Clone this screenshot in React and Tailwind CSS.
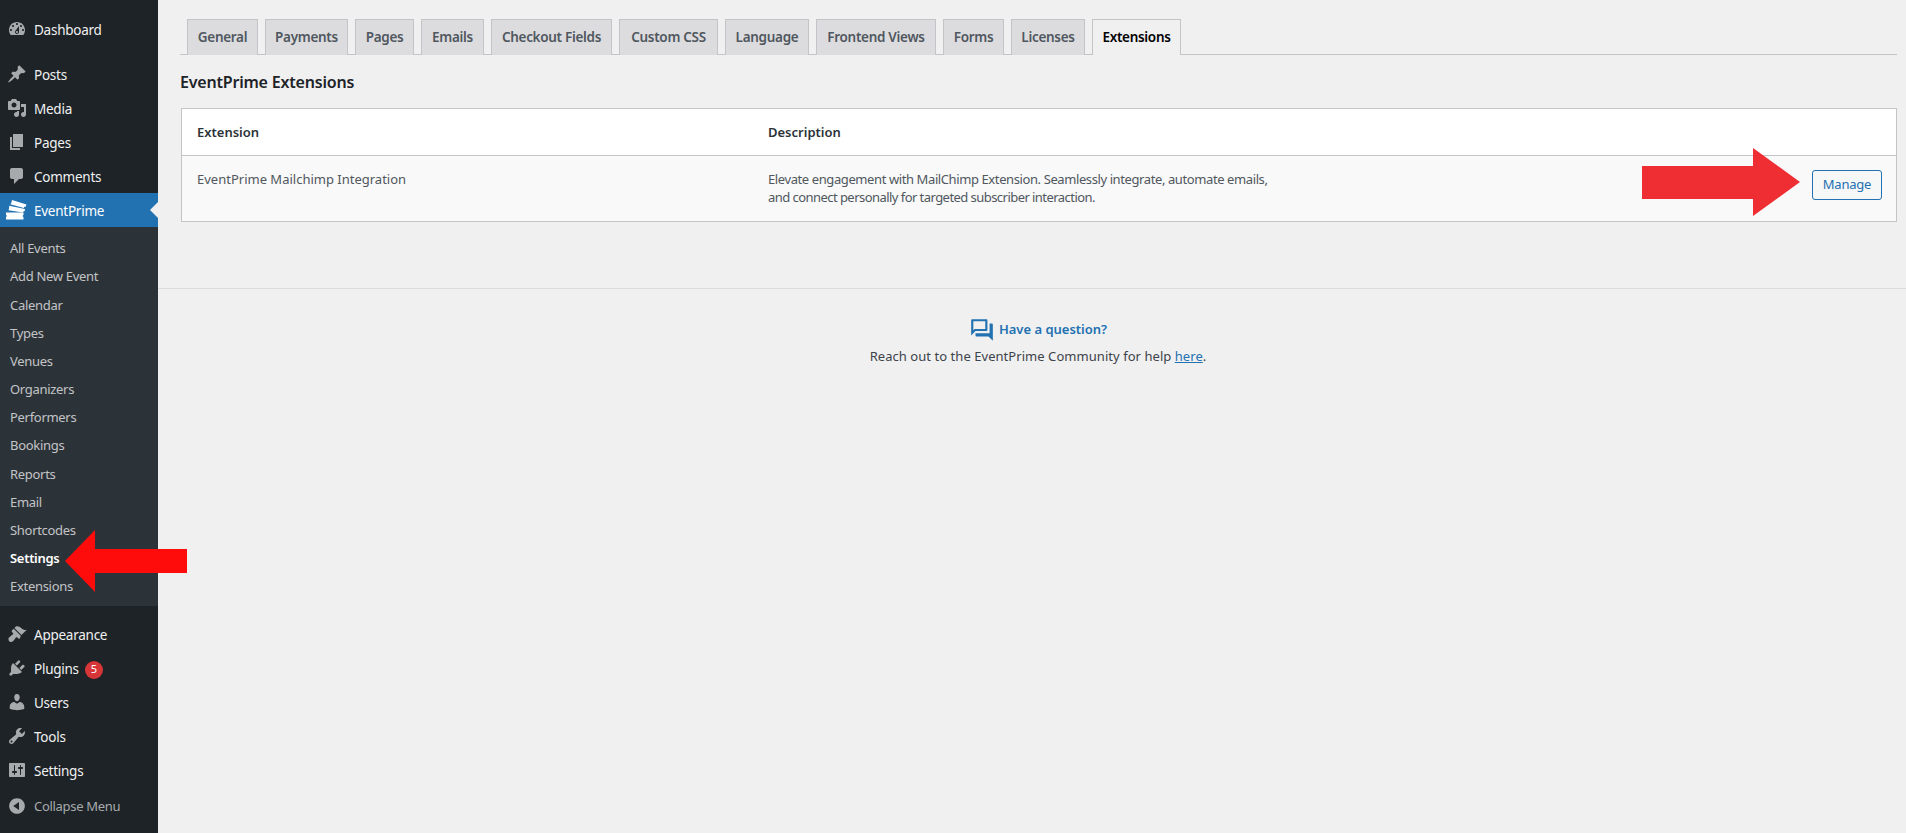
import React from 'react';

const FONT = "font-['Noto_Sans','Open_Sans',sans-serif]";

const icons = {
  dashboard: 'M3.76 16h12.48c1.1-1.37 1.76-3.11 1.76-5 0-4.42-3.58-8-8-8s-8 3.58-8 8c0 1.89.66 3.63 1.76 5zM10 4c.55 0 1 .45 1 1s-.45 1-1 1-1-.45-1-1 .45-1 1-1zM6 6c.55 0 1 .45 1 1s-.45 1-1 1-1-.45-1-1 .45-1 1-1zm8 0c.55 0 1 .45 1 1s-.45 1-1 1-1-.45-1-1 .45-1 1-1zm-5.37 5.55L12 7v6c0 1.1-.9 2-2 2s-2-.9-2-2c0-.57.24-1.08.63-1.45zM4 10c.55 0 1 .45 1 1s-.45 1-1 1-1-.45-1-1 .45-1 1-1zm12 0c.55 0 1 .45 1 1s-.45 1-1 1-1-.45-1-1 .45-1 1-1zm-5 3c0-.55-.45-1-1-1s-1 .45-1 1 .45 1 1 1 1-.45 1-1z',
  posts: 'M10.44 3.02l1.82-1.82 6.36 6.35-1.83 1.82c-1.05-.68-2.48-.57-3.41.36l-.75.75c-.92.93-1.04 2.35-.35 3.41l-1.83 1.82-2.41-2.41-2.8 2.79c-.42.42-3.38 2.71-3.8 2.29s1.86-3.39 2.28-3.81l2.79-2.79L4.1 9.36l1.83-1.82c1.05.69 2.48.57 3.4-.36l.75-.75c.93-.92 1.05-2.35.36-3.41z',
  media: 'M13 11V4c0-.55-.45-1-1-1h-1.67L9 1H5L3.67 3H2c-.55 0-1 .45-1 1v7c0 .55.45 1 1 1h10c.55 0 1-.45 1-1zM7 4.5c1.38 0 2.5 1.12 2.5 2.5S8.38 9.5 7 9.5 4.5 8.38 4.5 7 5.62 4.5 7 4.5zM14 6h5v10.5c0 1.38-1.12 2.5-2.5 2.5S14 17.88 14 16.5s1.12-2.5 2.5-2.5c.17 0 .34.02.5.05V9h-3V6zm-4 8.05V13h2v3.5c0 1.38-1.12 2.5-2.5 2.5S7 17.88 7 16.5 8.12 14 9.5 14c.17 0 .34.02.5.05z',
  pages: 'M6 15V2h10v13H6zm-1 1h8v2H3V5h2v11z',
  comments: 'M5 2h9c1.1 0 2 .9 2 2v7c0 1.1-.9 2-2 2h-2l-5 5v-5H5c-1.1 0-2-.9-2-2V4c0-1.1.9-2 2-2z',
  appearance: 'M14.48 11.06L7.41 3.99l1.5-1.5c.5-.56 2.3-.47 3.51.32 1.21.8 1.43 1.28 2.91 2.1 1.18.64 2.45 1.26 4.45.85zm-.71.71L6.7 4.7 4.93 6.47c-.39.39-.39 1.02 0 1.41l1.06 1.06c.39.39.39 1.03 0 1.42-.6.6-1.43 1.11-2.21 1.69-.35.26-.7.53-1.01.84C1.43 13.23.99 15.41 2 16.99s3.1 1.05 4.46-.31c.31-.31.58-.66.84-1.01.58-.78 1.09-1.61 1.69-2.21.39-.39 1.02-.39 1.41 0l1.06 1.06c.39.39 1.02.39 1.41 0z',
  plugins: 'M13.11 4.36L9.87 7.6 8 5.73l3.24-3.24c.35-.34 1.05-.2 1.56.32.52.51.66 1.21.31 1.55zm-8 1.77l.91-1.12 9.01 9.01-1.19.84c-.71.71-2.63 1.16-3.82 1.16H6.14L4.9 17.26c-.59.59-1.54.59-2.12 0-.59-.58-.59-1.53 0-2.12l1.24-1.24v-3.88c0-1.13.4-3.19 1.09-3.89zm7.26 3.97l3.24-3.24c.34-.35 1.04-.21 1.55.31.52.51.66 1.21.31 1.55l-3.24 3.25z',
  users: 'M10 9.25c-2.27 0-2.73-3.44-2.73-3.44C7 4.02 7.82 2 9.97 2c2.16 0 2.98 2.02 2.71 3.81 0 0-.41 3.44-2.68 3.44zm0 2.57L12.72 10c2.39 0 4.52 2.33 4.52 4.53v2.49s-3.65 1.13-7.24 1.13c-3.65 0-7.24-1.13-7.24-1.13v-2.49c0-2.25 1.94-4.48 4.47-4.48z',
  tools: 'M16.68 9.77c-1.34 1.34-3.3 1.67-4.95.99l-5.41 6.52c-.99.99-2.59.99-3.58 0s-.99-2.59 0-3.57l6.52-5.42c-.68-1.65-.35-3.61.99-4.95 1.28-1.28 3.12-1.62 4.72-1.06l-2.89 2.89 2.82 2.82 2.86-2.87c.53 1.58.18 3.39-1.08 4.65zM3.81 16.21c.4.39 1.04.39 1.43 0 .4-.4.4-1.04 0-1.43-.39-.4-1.03-.4-1.43 0-.39.39-.39 1.03 0 1.43z',
  settings: 'M18 16V4c0-.55-.45-1-1-1H3c-.55 0-1 .45-1 1v12c0 .55.45 1 1 1h14c.55 0 1-.45 1-1zM8 11h1c.55 0 1 .45 1 1s-.45 1-1 1H8v1.5c0 .28-.22.5-.5.5s-.5-.22-.5-.5V13H6c-.55 0-1-.45-1-1s.45-1 1-1h1V5.5c0-.28.22-.5.5-.5s.5.22.5.5V11zm5-2h-1c-.55 0-1-.45-1-1s.45-1 1-1h1V5.5c0-.28.22-.5.5-.5s.5.22.5.5V7h1c.55 0 1 .45 1 1s-.45 1-1 1h-1v5.5c0 .28-.22.5-.5.5s-.5-.22-.5-.5V9z',
  collapse: 'M10 2.16c4.33 0 7.84 3.51 7.84 7.84s-3.51 7.84-7.84 7.84S2.16 14.33 2.16 10 5.71 2.16 10 2.16zm2 11.72V6.12L6.18 9.97z',
};

const Dashicon = ({ name }) => (
  <svg viewBox="0 0 20 20" className="w-5 h-5 fill-[#a7aaad] shrink-0">
    <path fillRule="evenodd" d={icons[name]} />
  </svg>
);

// stacked tickets, white on the active item
const TicketsIcon = () => (
  <svg viewBox="0 0 22 22" className="w-[22px] h-[22px] fill-white shrink-0">
    <path d="M7 1l14.500 4.500-.8 2.300c-1-.3-1.700.2-1.800 1.300L5.200 5.200C6 4.700 6.500 3.800 7 1z" />
    <path d="M4.200 6.800L20 10l-.4 2.300c-.9 0-1.500.5-1.600 1.200L3.400 11.300c.6-.7.8-2.300.8-4.500z" />
    <path d="M1 13.500H18.500V16c-1 .2-1 1.800 0 2V20.500H1V18c1-.3 1-1.800 0-2z" />
  </svg>
);

const MenuItem = ({ icon, label, badge }) => (
  <div className="flex items-center h-[34px] pl-[7px] text-[13.5px] tracking-[-0.25px] text-[#f0f0f1]">
    <Dashicon name={icon} />
    <span className="ml-[7px] pt-[2px]">{label}</span>
    {badge && (
      <span className="ml-[6px] mt-[3px] w-[18px] h-[18px] rounded-full bg-[#d63638] text-white text-[11px] flex items-center justify-center">
        {badge}
      </span>
    )}
  </div>
);

const subItems = ['All Events', 'Add New Event', 'Calendar', 'Types', 'Venues', 'Organizers', 'Performers', 'Bookings', 'Reports', 'Email', 'Shortcodes', 'Settings', 'Extensions'];

const tabs = [
  { label: 'General', width: 'w-[71px]' },
  { label: 'Payments', width: 'w-[83px]' },
  { label: 'Pages', width: 'w-[59px]' },
  { label: 'Emails', width: 'w-[63px]' },
  { label: 'Checkout Fields', width: 'w-[121px]' },
  { label: 'Custom CSS', width: 'w-[99px]' },
  { label: 'Language', width: 'w-[84px]' },
  { label: 'Frontend Views', width: 'w-[120px]' },
  { label: 'Forms', width: 'w-[61px]' },
  { label: 'Licenses', width: 'w-[74px]' },
];

const Sidebar = () => (
  <aside className="w-[158px] shrink-0 bg-[#1d2327] pt-3">
    <MenuItem icon="dashboard" label="Dashboard" />
    <div className="h-[11px]" />
    <MenuItem icon="posts" label="Posts" />
    <MenuItem icon="media" label="Media" />
    <MenuItem icon="pages" label="Pages" />
    <MenuItem icon="comments" label="Comments" />
    <div className="flex items-center h-[34px] pl-[5px] text-[13.5px] tracking-[-0.25px] text-white bg-[#2271b1] relative">
      <TicketsIcon />
      <span className="ml-[7px] pt-[2px]">EventPrime</span>
      <span className="absolute right-0 top-[9px] border-y-[8px] border-r-[8px] border-y-transparent border-r-[#f0f0f1]" />
    </div>
    <div className="bg-[#2c3338] h-[379px] pt-[8px]">
      {subItems.map((item, i) => (
        <div
          key={item}
          className={`h-[28.17px] flex items-center pl-[10px] text-[13px] tracking-[-0.3px] ${i === 11 ? 'text-white font-semibold' : 'text-[#c3c4c7]'}`}
        >
          {item}
        </div>
      ))}
    </div>
    <div className="h-[11px]" />
    <MenuItem icon="appearance" label="Appearance" />
    <MenuItem icon="plugins" label="Plugins" badge="5" />
    <MenuItem icon="users" label="Users" />
    <MenuItem icon="tools" label="Tools" />
    <MenuItem icon="settings" label="Settings" />
    <div className="flex items-center h-9 pl-[7px] text-[13px] tracking-[-0.3px] text-[#a7aaad] pt-[2px]">
      <Dashicon name="collapse" />
      <span className="ml-[7px] pt-px">Collapse Menu</span>
    </div>
  </aside>
);

const App = () => (
  <div className={`relative flex w-[1906px] h-[833px] overflow-hidden bg-[#f0f0f1] ${FONT}`}>
    <Sidebar />
    <main className="flex-1 min-w-0">
      <div className="pl-[22px] pr-[9px]">
        {/* Tabs */}
        <div className="mt-[19px] h-[36px] flex gap-[7px] pl-[7px] border-b border-[#c3c4c7]">
          {tabs.map((tab) => (
            <div
              key={tab.label}
              className={`${tab.width} h-[36px] flex items-center justify-center bg-[#dcdcde] border border-b-0 border-[#c3c4c7] text-[13.5px] tracking-[-0.3px] font-semibold text-[#50575e]`}
            >
              {tab.label}
            </div>
          ))}
          <div className="w-[89px] h-[36px] flex items-center justify-center bg-[#f0f0f1] border border-b-0 border-[#c3c4c7] text-[13.5px] tracking-[-0.3px] font-semibold text-black">
            Extensions
          </div>
        </div>

        <h2 className="mt-[16px] text-[16px] leading-[22px] tracking-[-0.2px] font-semibold text-[#1d2327]">EventPrime Extensions</h2>

        {/* Table */}
        <div className="mt-[15px] ml-px border border-[#c3c4c7] text-[13px]">
          <div className="flex h-[47px] pt-px items-center bg-white border-b border-[#c3c4c7] font-semibold text-[#2c3338]">
            <div className="w-[586px] pl-[15px]">Extension</div>
            <div>Description</div>
          </div>
          <div className="flex h-[65px] bg-[#f9f9f9] text-[#50575e] relative">
            <div className="w-[586px] pl-[15px] pt-[14px] leading-[18px]">EventPrime Mailchimp Integration</div>
            <div className="pt-[14px] leading-[18px] w-[520px]">
              <div className="tracking-[-0.4px]">Elevate engagement with MailChimp Extension. Seamlessly integrate, automate emails,</div>
              <div className="tracking-[-0.55px]">and connect personally for targeted subscriber interaction.</div>
            </div>
            <div className="ml-auto mr-[14px] mt-[14px] h-[30px] w-[70px] flex items-center justify-center rounded-[3px] border border-[#2271b1] text-[#2271b1] tracking-[-0.2px] bg-[#f6f7f7]">
              Manage
            </div>
          </div>
        </div>
      </div>

      {/* Footer help */}
      <div className="mt-[66px] border-t border-[#dcdcde] flex flex-col items-center pt-[28px] pl-[12px]">
        <div className="flex items-center gap-[4px] text-[13px] font-semibold text-[#2271b1]">
          <svg viewBox="0 0 24 24" className="w-[26px] h-[26px] fill-[#2271b1]">
            <path d="M15 4v7H5.170L4 12.170V4h11m1-2H3c-.55 0-1 .45-1 1v14l4-4h10c.55 0 1-.45 1-1V3c0-.55-.45-1-1-1zm5 4h-2v9H6v2c0 .55.45 1 1 1h11l4 4V7c0-.55-.45-1-1-1z" />
          </svg>
          Have a question?
        </div>
        <p className="mt-[4px] text-[13px] tracking-[0.05px] text-[#3c434a]">
          Reach out to the EventPrime Community for help <span className="text-[#2271b1] underline">here</span>.
        </p>
      </div>
    </main>

    {/* Annotation arrows */}
    <svg viewBox="0 0 122 62" className="absolute left-[65px] top-[530px] w-[122px] h-[62px] fill-[#fe0c0c]">
      <path d="M0 31L30 0V19H122V43H30V62z" />
    </svg>
    <svg viewBox="0 0 158 68" className="absolute left-[1642px] top-[148px] w-[158px] h-[68px] fill-[#ee2e33]">
      <path d="M158 34L111 0V18H0V51H111V68z" />
    </svg>
  </div>
);

export default App;
